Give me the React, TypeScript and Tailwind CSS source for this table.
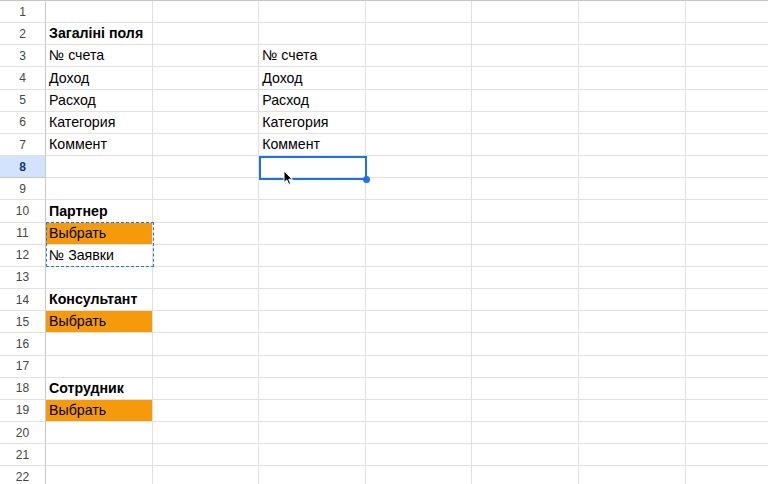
import React from "react";

type Cell = { text: string; bold?: boolean; orange?: boolean };

const ROWS = 22;
const COLS = 7;

const data: Record<string, Cell> = {
  "2-0": { text: "Загаліні поля", bold: true },
  "3-0": { text: "№ счета" },
  "4-0": { text: "Доход" },
  "5-0": { text: "Расход" },
  "6-0": { text: "Категория" },
  "7-0": { text: "Коммент" },
  "3-2": { text: "№ счета" },
  "4-2": { text: "Доход" },
  "5-2": { text: "Расход" },
  "6-2": { text: "Категория" },
  "7-2": { text: "Коммент" },
  "10-0": { text: "Партнер", bold: true },
  "11-0": { text: "Выбрать", orange: true },
  "12-0": { text: "№ Заявки" },
  "14-0": { text: "Консультант", bold: true },
  "15-0": { text: "Выбрать", orange: true },
  "18-0": { text: "Сотрудник", bold: true },
  "19-0": { text: "Выбрать", orange: true },
};

const Cursor = () => (
  <svg width="12" height="16" viewBox="0 0 12 16" className="absolute left-[283px] top-[169px]">
    <path d="M1 1 L1 12.5 L3.8 9.9 L5.8 14.4 L7.6 13.6 L5.7 9.3 L9.4 9.3 Z" fill="#000" stroke="#fff" strokeWidth="1" strokeLinejoin="round" />
  </svg>
);

export default function App() {
  const rows = Array.from({ length: ROWS }, (_, i) => i + 1);
  const cols = Array.from({ length: COLS }, (_, i) => i);

  return (
    <div className="relative w-[768px] h-[484px] overflow-hidden bg-white border-t border-[#c7c7c7]" style={{ fontFamily: '"Liberation Sans", Arial, sans-serif' }}>
      <div className="grid grid-cols-[46px_repeat(7,106.6px)] auto-rows-[22.17px]">
        {rows.map((r) => (
          <React.Fragment key={r}>
            <div
              className={
                r === 8
                  ? "flex items-center justify-center border-r border-b border-[#c7c7c7] bg-[#d3e3fd] text-[12px] font-bold text-[#0b3a7a]"
                  : "flex items-center justify-center border-r border-b border-[#c7c7c7] border-b-[#e1e1e1] text-[12px] text-[#444746]"
              }
            >
              {r}
            </div>
            {cols.map((c) => {
              const cell = data[`${r}-${c}`];
              return (
                <div
                  key={c}
                  className={
                    "flex items-end overflow-visible whitespace-nowrap border-r border-b border-[#e1e1e1] px-[3px] pb-[2px] text-[14.2px] leading-[17px] text-black " +
                    (cell?.orange ? "bg-[#f59b0b] " : "") +
                    (cell?.bold ? "font-bold" : "")
                  }
                >
                  {cell?.text}
                </div>
              );
            })}
          </React.Fragment>
        ))}
      </div>

      {/* copy marquee A11:A12 */}
      <div className="absolute left-[46px] top-[221px] w-[107.5px] h-[45px] border border-dashed border-[#1a73e8]" />

      {/* selected cell C8 */}
      <div className="absolute left-[258.5px] top-[154.5px] w-[108px] h-[24px] border-2 border-[#1a73e8]" />
      <div className="absolute left-[363px] top-[175px] w-[7px] h-[7px] rounded-full bg-[#1a73e8]" />

      <Cursor />
    </div>
  );
}
